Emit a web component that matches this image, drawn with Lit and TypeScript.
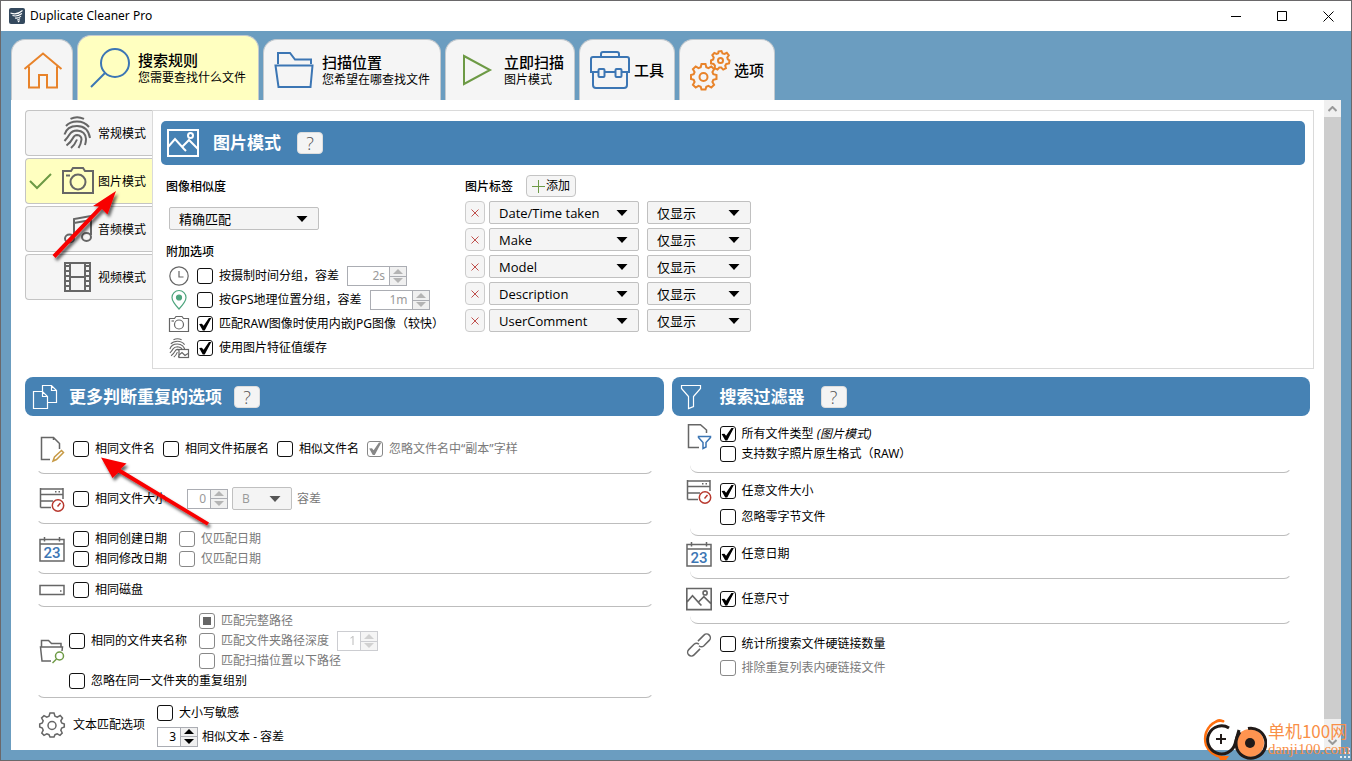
import { LitElement, html, svg, css, nothing } from "lit";
import { customElement, state } from "lit/decorators.js";
import { classMap } from "lit/directives/class-map.js";

const icon = (w: number, h: number, body: unknown, cls = "", box = `0 0 ${w} ${h}`) =>
  html`<svg class="ico ${cls}" width=${w} height=${h} viewBox=${box} aria-hidden="true">${body}</svg>`;

const print = svg`
  <path d="M7.500 2.800Q14 -.500 21 2.800"/>
  <path d="M3 10Q7 5.500 14 5.500Q21.500 5.500 26 11"/>
  <path d="M1.500 18.500Q4 10 14 10Q25 10 27 22"/>
  <path d="M1.500 25Q5 21 6.500 18.500Q9 14.500 14 14.500Q22.500 15 23 23Q23 26 22 29"/>
  <path d="M3.500 29.500Q8 26 10 22Q11.500 19 14 19Q18.500 19.500 18.500 23.500Q18 28 15.500 32"/>
  <path d="M8 32Q12 28.500 14 23.500"/>`;

const I = {
  home: () => icon(40, 40, svg`<path d="M2.500 19L21 3.500L39.500 19M7 16.500V37.500H17V25H25V37.500H35V16.500" />`, "orange s2"),
  search: () => icon(40, 40, svg`<circle cx="25" cy="15" r="14"/><path d="M15 25L1 39"/>`, "blue s2"),
  folder: () => icon(40, 40, svg`<path d="M4 14V3H16L21 9.500H37V14M1.500 15.500H38.500L36.500 37H4.500Z"/>`, "blue s2"),
  play: () => icon(40, 40, svg`<path d="M8 6L34 20L8 34Z"/>`, "green s2"),
  tools: () => icon(40, 40, svg`<path d="M11 7V4Q11 2 13 2H27Q29 2 29 4V7M3 7H37Q39 7 39 9V22H32M8 22H1V9Q1 7 3 7M15 22H25"/><rect x="8.500" y="19" width="6" height="8" rx="1"/><rect x="25.500" y="19" width="6" height="8" rx="1"/><path d="M3 23V35Q3 38 6 38H34Q37 38 37 35V23"/>`, "blue s2"),
  gears: () => icon(40, 40, svg`
    <path d="M11.500 14H15.500L16.300 17.200L18.500 18.100L21.300 16.400L24.100 19.200L22.400 22L23.300 24.200L26.500 25V29L23.300 29.800L22.400 32L24.100 34.800L21.300 37.600L18.500 35.900L16.300 36.800L15.500 39.500H11.500L10.700 36.800L8.500 35.900L5.700 37.600L2.900 34.800L4.600 32L3.700 29.800L1 29V25L3.700 24.200L4.600 22L2.900 19.200L5.700 16.400L8.500 18.100L10.700 17.200Z"/><circle cx="13.500" cy="27" r="4"/>
    <path d="M28.500 1.500L31.500 1L32.500 3.500L34.500 4L36.800 2.800L38.800 5.200L37.300 7.500L37.800 9.300L39.500 10.500L39 13.500L36.300 14L35.200 15.600L35.900 18.300L33.200 19.600L31.200 17.600L29.300 17.600L27.500 19.500L24.800 18.400L24.900 15.600L23.600 14L21 13.500V10.500L23.200 9.500L23.700 7.500L22.300 5.200L24.300 3L26.700 4L28.200 3.300Z"/><circle cx="30.500" cy="10.500" r="2.500"/>`, "orange s2"),
  print: () => icon(32, 34, svg`<g transform="translate(1 0)">${print}</g>`, "grey s2"),
  camera: () => icon(32, 28, svg`<path d="M1 4H9L11 1H21L23 4H31V26H1Z"/><circle cx="16" cy="15" r="7.500"/><path d="M4 8.500H8"/>`, "grey s2"),
  music: () => icon(32, 30, svg`<path d="M12 23V5L29 2V21M12 9L29 6"/><ellipse cx="7.500" cy="24.500" rx="4.500" ry="4"/><ellipse cx="24.500" cy="23" rx="4.500" ry="4"/>`, "grey s2"),
  film: () => icon(32, 32, svg`<path d="M3 2H28V30H3ZM8 2V30M23 2V30M8 16H23"/><path d="M5.500 4V29M25.500 4V29" stroke-dasharray="2 3" stroke-width="3"/>`, "grey s2"),
  tick: () => icon(24, 20, svg`<path d="M1 10L8 17L22 3"/>`, "green s2 tick"),
  picture: (w: number, h: number, cls: string) => icon(w, h, svg`<path d="M1 1H31V27H1ZM1 18L8 10L17 20L19 22M15 18L22 11L31 20"/><circle cx="23.500" cy="6.500" r="2.500"/>`, cls, "0 0 32 28"),
  clock: () => icon(20, 20, svg`<circle cx="10" cy="10" r="9.200"/><path d="M10 5V11H14.500"/>`, "grey s1"),
  pin: () => icon(20, 20, svg`<path d="M10 19Q3 11.500 3 7.500A7 7 0 0 1 17 7.500Q17 11.500 10 19Z"/><circle cx="10" cy="7.500" r="2.500" fill="#4ea57e"/>`, "teal s1"),
  cameraSmall: () => icon(20, 20, svg`<path d="M.500 4.500H5.500L7 2.500H13L14.500 4.500H19.500V17.500H.500Z"/><circle cx="10" cy="10.500" r="4.500"/><path d="M2.500 7H5"/>`, "grey s1"),
  printSmall: () => icon(20, 20, svg`<g transform="scale(.6)" stroke-width="1.800">${print}</g><rect x="10" y="11.500" width="9.500" height="8" fill="#fff"/><path d="M10 17L13 14.500L16 17.500L19 15.500"/>`, "grey s1"),
  copies: () => icon(26, 26, svg`<path d="M1.500 7.500H10.500L15.500 12.500V24.500H1.500ZM10.500 7.500V12.500H15.500M10.500 7V1.500H19.500L24.500 6.500V18.500H16M19.500 1.500V6.500H24.500"/>`, "white s1"),
  funnel: () => icon(26, 26, svg`<path d="M2.500 1.500H21.500V4.500L14.500 12.500V22.500L9.500 24.500V12.500L2.500 4.500Z"/>`, "white s1"),
  docPen: () => icon(26, 26, svg`<path d="M11 23.500H2.500V1.500H14.500L20.500 7.500V13M14.500 1.500V4"/><path class="gold" d="M14 25L15.500 21L22.500 14.500L24.500 16.500L17.500 23.500Z"/>`, "grey s15"),
  docFunnel: () => icon(26, 26, svg`<path d="M13 23.500H2.500V.700H14.500L20.500 6V9"/><path class="bluepart" d="M12.500 12.500H24.500V13.500L20 18.500V23L17 24.500V18.500L12.500 13.500Z"/>`, "grey s15"),
  disk: () => icon(26, 26, svg`<path d="M12 21.500H1.500M1 3H24M24 2V13M1.500 2V21.500M1.500 8.500H24M1.500 15H14M16 5.700H17.500M19.500 5.700H21"/><g class="red"><circle cx="19" cy="19.500" r="5.700" fill="#fff"/><path d="M18.500 20.500L21.500 17"/></g>`, "grey s15"),
  calendar: () => icon(26, 26, svg`<path d="M1 3.500H25V25H1ZM1 8H25M5.500 1V5.500M20.500 1V5.500"/><text x="13" y="22" text-anchor="middle" class="day">23</text>`, "grey s15"),
  drive: () => icon(26, 26, svg`<path d="M1 8.500H25V17.500H1Z"/><path d="M21 14H22.500"/>`, "grey s15"),
  folderFind: () => icon(26, 26, svg`<path d="M2.500 9V2.500H9.500L12.500 5.500H22V9M12 23H3L1.500 9H23.500L23 13"/><g class="greenpart"><circle cx="20.500" cy="18" r="4"/><path d="M17.500 21L13.500 25"/></g>`, "grey s15"),
  gear: () => icon(26, 26, svg`<path d="M11 1H15L16 4.300L18.200 5.200L21.200 3.500L23.500 6L21.800 8.800L22.700 11L25.300 12V15L22.700 16L21.800 18.200L23.200 21L21 23.300L18.200 21.800L16 22.700L15 25H11L10 22.700L7.800 21.800L5 23.300L2.800 21L4.200 18.200L3.300 16L.700 15V12L3.300 11L4.200 8.800L2.600 6L5 3.600L7.800 5.200L10 4.300Z"/><circle cx="13" cy="13.500" r="4"/>`, "grey s15"),
  link: () => icon(26, 26, svg`<g transform="rotate(-45 13 13)"><path d="M11 16.500H2.500A3.700 3.700 0 0 1 2.500 9H10A3.700 3.700 0 0 1 13.500 12.500M15 9.500H23.500A3.700 3.700 0 0 1 23.500 17H16A3.700 3.700 0 0 1 12.500 13.500"/></g>`, "grey s15"),
};

interface CheckOpts { on?: boolean; off?: boolean; mixed?: boolean }

const check = (text: unknown, o: CheckOpts = {}) => html`
  <label class="check"><input type="checkbox" .checked=${!!o.on} .indeterminate=${!!o.mixed} ?disabled=${!!o.off} /><span>${text}</span></label>`;

const pick = (label: string, options: string[], size: string, disabled = false) => html`
  <span class="pick ${size}">
    <select aria-label=${label} ?disabled=${disabled}>${options.map((t) => html`<option>${t}</option>`)}</select>
    <svg width="12" height="6" viewBox="0 0 12 6" aria-hidden="true"><path d="M.500 0H11.500L6 6Z"/></svg>
  </span>`;

const spin = (label: string, value: string, cls = "", disabled = true) => html`
  <span class="spin ${cls}">
    <input type="text" aria-label=${label} .value=${value} ?disabled=${disabled} />
    <span class="steps">
      <button aria-label="${label} +" ?disabled=${disabled}><svg width="10" height="5" viewBox="0 0 10 5"><path d="M0 5L5 0L10 5Z"/></svg></button>
      <button aria-label="${label} −" ?disabled=${disabled}><svg width="10" height="5" viewBox="0 0 10 5"><path d="M0 0L5 5L10 0Z"/></svg></button>
    </span>
  </span>`;

const help = () => html`<button class="help" aria-label="帮助">?</button>`;

@customElement("app-root")
export class AppRoot extends LitElement {
  static styles = css`
    :host { display: flex; flex-direction: column; height: 100vh; box-sizing: border-box; position: relative;
      border: 1px solid #6a686a; background: #6b9dc0; color: #000; overflow: hidden;
      font: 12px/20px "Noto Sans", "Noto Sans CJK SC", sans-serif; }
    * { box-sizing: border-box; }
    button, input, select { font: inherit; color: inherit; margin: 0; padding: 0; }
    h2, h3 { margin: 0; }
    .ico { fill: none; flex: none; stroke: #666; display: block; overflow: visible; }
    .s1 { stroke-width: 1.2; } .s15 { stroke-width: 1.5; } .s2 { stroke-width: 2; }
    .blue { stroke: #3c76b4; } .orange { stroke: #e8832a; } .green { stroke: #6d9a45; }
    .teal { stroke: #4ea57e; } .white { stroke: #fff; }
    .gold { stroke: #c79a45; } .bluepart { stroke: #3c76b4; } .red { stroke: #b8392f; } .greenpart { stroke: #6d9a45; }
    .day { font: 500 15px Roboto, sans-serif; fill: #3c76b4; stroke: none; }

    .titlebar { flex: none; height: 30px; display: flex; align-items: center; background: #fff; padding-left: 8px; }
    .titlebar .name { margin-left: 5px; flex: 1; }
    .winbtn { width: 46px; height: 30px; border: 0; background: none; display: grid; place-items: center; }
    .winbtn svg { fill: none; stroke: #000; }

    .tabs { flex: none; height: 69px; display: flex; align-items: flex-end; gap: 4px; padding: 0 10px; }
    .tab { height: 61px; display: flex; align-items: center; gap: 4px; padding: 0 10px; text-align: left;
      border: 1px solid #c3c9ce; border-bottom: 0; border-radius: 14px 14px 0 0; background: #f5f5f5; white-space: nowrap; }
    .tab.sub { gap: 8px; }
    .tab.sub span { padding-top: 2px; }
    .tab.active { height: 65px; background: #ffffc0; padding: 0 12px; }
    .tab b { display: block; font-size: 15px; line-height: 18px; font-weight: 500; }
    .tab small { display: block; font-size: 12px; line-height: 18px; }

    .body { flex: 1; min-height: 0; margin: 0 10px 10px; display: flex; background: #fff; }
    .page { flex: 1; min-width: 0; overflow-y: auto; scrollbar-width: none; padding: 10px 10px 0 14px; }
    .bar { flex: none; width: 17px; display: flex; flex-direction: column; background: #f0f0f0; }
    .bar button { border: 0; height: 17px; background: #f0f0f0; display: grid; place-items: center; }
    .bar svg { fill: none; stroke: #999; stroke-width: 2; }
    .thumb { flex: 1; background: #cdcdcd; margin-bottom: 14px; }

    .top { display: flex; }
    .modes { display: flex; flex-direction: column; gap: 2px; width: 127px; flex: none; }
    .mode { height: 46px; display: grid; grid-template-columns: 29px 32px 48px; column-gap: 4px; align-items: center;
      padding: 0 0 0 3px; border: 1px solid #c4c4c4; border-right: 0; border-radius: 4px 0 0 4px; background: #f5f5f5; text-align: left; white-space: nowrap; }
    .mode span { padding-top: 2px; }
    .mode .ico { justify-self: center; }
    .mode .tick { justify-self: start; }
    .mode.active { background: #ffffc0; }
    .panel { flex: 1; min-width: 0; border: 1px solid #dadada; padding: 10px 8px 8px; }

    .head { display: flex; align-items: center; background: #4682b4; color: #fff; }
    .head h2 { font-size: 17px; line-height: 24px; font-weight: 700; }
    .panel .head { height: 44px; border-radius: 5px; padding-left: 6px; }
    .panel .head h2 { margin: 0 16px 0 14px; }
    .card .head { height: 39px; border-radius: 8px; padding-left: 7px; }
    .card .head h2 { margin: 0 12px 0 11px; }
    .card.filters .head h2 { margin: 0 16px 0 15px; }
    .help { width: 26px; height: 22px; border: 1px solid #ddd; border-radius: 4px; background: #f4f4f4; color: #555; font: 300 18px/20px "Open Sans", sans-serif; }

    .cols { display: flex; padding-top: 10px; }
    .left { width: 304px; padding-left: 8px; flex: none; }
    h3 { font-size: 12px; height: 22px; line-height: 24px; font-weight: 500; }
    .left h3 { margin-left: -3px; }
    .left .pick { margin: 10px 0; }
    .opt { height: 24px; display: flex; align-items: center; gap: 8px; white-space: nowrap; }
    .opts { padding-top: 2px; }
    .tagsHead { display: flex; gap: 13px; margin-bottom: 4px; }
    .add { height: 22px; width: 50px; border: 1px solid #c4c4c4; border-radius: 4px; background: #f5f5f5; display: flex; align-items: center; justify-content: center; gap: 1px; }
    .tag { display: flex; margin-bottom: 4px; }
    .del { width: 20px; height: 23px; border: 1px solid #ccc; border-radius: 4px; background: #f5f5f5; display: grid; place-items: center; margin-right: 4px; }
    .del svg { stroke: #c0504d; fill: none; }
    .tag .wide { margin-right: 8px; }

    .pick { display: grid; height: 23px; align-items: center; }
    .pick select, .pick svg { grid-area: 1 / 1; }
    .pick select { appearance: none; width: 100%; height: 23px; border: 1px solid #c0c0c0; border-radius: 2px; background: #f4f4f4; padding: 1px 24px 0 9px; font: 13px/20px "Open Sans", "Noto Sans CJK SC", sans-serif; }
    .pick svg { justify-self: end; margin-right: 11px; pointer-events: none; }
    .pick select:disabled { color: #999; opacity: 1; font-size: 12px; }
    .pick select:disabled + svg { fill: #555; }
    .wide { width: 150px; } .mid { width: 104px; } .slim { width: 60px; }

    .check { display: inline-flex; align-items: center; gap: 6px; white-space: nowrap; }
    .check input { appearance: none; flex: none; width: 16px; height: 16px; border: 1px solid #111; border-radius: 3px; background: #fff; display: grid; }
    .check input::before { content: ""; }
    .check input:checked::before { background: #000; clip-path: polygon(8% 50%, 28% 48%, 40% 62%, 78% 8%, 95% 8%, 48% 96%, 34% 96%); }
    .check input:indeterminate::before { background: #666; margin: 3px; }
    .check input:disabled { border-color: #888; }
    .check input:disabled:checked::before { background: #888; }
    .check input:disabled + span { color: #7a7a7a; }

    .spin { display: inline-flex; width: 41px; height: 20px; border: 1px solid #abadb3; background: #fff; }
    .spin.long { width: 60px; }
    .spin > input { flex: 1; min-width: 0; width: 0; border: 0; background: none; text-align: right; padding-right: 4px; line-height: 18px; }
    .spin > input:disabled { color: #9a9a9a; }
    .steps { width: 17px; display: flex; flex-direction: column; border-left: 1px solid #abadb3; background: #f0f0f0; }
    .steps button { flex: 1; border: 0; background: none; display: grid; place-items: center; }
    .steps button + button { border-top: 1px solid #abadb3; }
    .steps svg { fill: #000; display: block; }
    .steps button:disabled svg { fill: #b4b4b4; }
    .spin.faint { opacity: 0.6; }

    .bottom { display: grid; grid-template-columns: 1fr 1fr; gap: 8px; margin: 8px 4px 0 0; }
    .criteria .list { margin: 8px 10px 0 11px; }
    .filters .list { margin: 1px 18px 0 18px; }
    .sec { display: flex; gap: 8px; align-items: center; border: 1px solid transparent; border-bottom-color: #bdbdbd; border-width: 0 1px 1px; border-radius: 8px; white-space: nowrap; padding-left: 2px; }
    .sec:last-child { border-bottom-color: transparent; }
    .line { display: flex; align-items: center; gap: 8px; height: 20px; }
    .line.far { gap: 12px; }
    .mute { color: #777; }
    .h50 { height: 50px; } .h33 { height: 33px; }
    .folders { height: 91px; gap: 4px; padding-bottom: 2px; }
    .pathRow { display: flex; align-items: center; gap: 12px; }
    .texts { height: 54px; }
    .texts .line { height: 24px; gap: 4px; }
    .texts .rows { margin-left: 4px; }
    .size .spin { margin-left: 12px; }
    .size .pick { margin-left: -4px; margin-right: -3px; }
    .filters .sec { align-items: flex-start; border-left-width: 0; padding-left: 0; }
    .filters .sec > .ico { margin-left: -4px; }
    .types { height: 56px; padding-top: 7px; }
    .sizes { height: 63px; padding-top: 5px; } .sizes .line { height: 26px; }
    .dates { height: 43px; padding-top: 5px; } .dates .line { height: 26px; }
    .dims { height: 45px; padding-top: 7px; } .dims .line { height: 26px; }
    .links { padding-top: 8px; } .links .line { height: 24px; }

    .marks { position: absolute; left: -1px; top: -1px; pointer-events: none; }
    .brand { position: absolute; right: 1px; bottom: 0; display: flex; gap: 1px; align-items: flex-start; color: #f98f47; pointer-events: none; }
    .brand div { padding-top: 4px; height: 42px; }
    .brand p { margin: 0; font: 17px/18px "Noto Sans CJK SC", sans-serif; }
    .brand p + p { font: 15px/18px "Liberation Serif", serif; }
    .grip { position: absolute; right: 1px; bottom: 1px; fill: #e8eef2; }
  `;

  static modes = [
    { name: "常规模式", draw: I.print },
    { name: "图片模式", draw: I.camera },
    { name: "音频模式", draw: I.music },
    { name: "视频模式", draw: I.film },
  ];
  static tags = ["Date/Time taken", "Make", "Model", "Description", "UserComment"];

  @state() mode = 1;

  private tab(draw: () => unknown, title: string, sub = "", active = false) {
    return html`<button class=${classMap({ tab: true, sub: !!sub, active })} aria-label=${title || "主页"}>
      ${draw()}${title ? html`<span><b>${title}</b>${sub ? html`<small>${sub}</small>` : nothing}</span>` : nothing}
    </button>`;
  }

  render() {
    return html`
      <header class="titlebar">
        <svg width="16" height="16" viewBox="0 0 16 16" aria-hidden="true"><rect width="16" height="16" rx="2" fill="#34495e"/><path d="M1.500 5Q8 7.500 13.500 2.500M3.500 7.500Q8 9 13 5.500M6 10Q10 10.500 12 8M8 12Q10 12 11 10.500M9 14L10.500 12.500" fill="none" stroke="#fff" stroke-width="1.100"/></svg>
        <span class="name">Duplicate Cleaner Pro</span>
        <button class="winbtn" aria-label="最小化"><svg width="10" height="11"><path d="M0 5.500H10"/></svg></button>
        <button class="winbtn" aria-label="最大化"><svg width="11" height="11"><path d="M.500 .500H9.500V9.500H.500Z"/></svg></button>
        <button class="winbtn" aria-label="关闭"><svg width="11" height="11"><path d="M.500 .500L10.500 10.500M10.500 .500L.500 10.500"/></svg></button>
      </header>
      <nav class="tabs">
        ${this.tab(I.home, "")}
        ${this.tab(I.search, "搜索规则", "您需要查找什么文件", true)}
        ${this.tab(I.folder, "扫描位置", "您希望在哪查找文件")}
        ${this.tab(I.play, "立即扫描", "图片模式")}
        ${this.tab(I.tools, "工具")}
        ${this.tab(I.gears, "选项")}
      </nav>
      <main class="body">
        <div class="page">
          <div class="top">
            <div class="modes">
              ${AppRoot.modes.map((m, i) => html`<button class=${classMap({ mode: true, active: i === this.mode })} @click=${() => (this.mode = i)}>
                ${i === this.mode ? I.tick() : html`<span></span>`}${m.draw()}<span>${m.name}</span></button>`)}
            </div>
            <section class="panel">
              <div class="head">${I.picture(32, 28, "white s2")}<h2>图片模式</h2>${help()}</div>
              <div class="cols">
                <div class="left">
                  <h3>图像相似度</h3>
                  ${pick("图像相似度", ["精确匹配"], "wide")}
                  <h3>附加选项</h3>
                  <div class="opts">
                    <div class="opt">${I.clock()}${check("按摄制时间分组，容差")}${spin("时间容差", "2s", "long")}</div>
                    <div class="opt">${I.pin()}${check("按GPS地理位置分组，容差")}${spin("位置容差", "1m", "long")}</div>
                    <div class="opt">${I.cameraSmall()}${check("匹配RAW图像时使用内嵌JPG图像（较快）", { on: true })}</div>
                    <div class="opt">${I.printSmall()}${check("使用图片特征值缓存", { on: true })}</div>
                  </div>
                </div>
                <div>
                  <div class="tagsHead"><h3>图片标签</h3><button class="add"><svg width="13" height="13" stroke="#6d9a45" aria-hidden="true"><path d="M6.500 0V13M0 6.500H13"/></svg>添加</button></div>
                  ${AppRoot.tags.map((t) => html`<div class="tag">
                    <button class="del" aria-label="删除 ${t}"><svg width="8" height="8"><path d="M.500 .500L7.500 7.500M7.500 .500L.500 7.500"/></svg></button>
                    ${pick("标签", [t], "wide")}${pick("方式", ["仅显示"], "mid")}</div>`)}
                </div>
              </div>
            </section>
          </div>
          <div class="bottom">
            <section class="card criteria">
              <div class="head">${I.copies()}<h2>更多判断重复的选项</h2>${help()}</div>
              <div class="list">
                <div class="sec h50">${I.docPen()}${check("相同文件名")}${check("相同文件拓展名")}${check("相似文件名")}${check("忽略文件名中“副本”字样", { on: true, off: true })}</div>
                <div class="sec h50 size">${I.disk()}${check("相同文件大小")}${spin("大小容差", "0")}${pick("单位", ["B"], "slim", true)}<span class="mute">容差</span></div>
                <div class="sec h50">${I.calendar()}<div>
                  <div class="line far">${check("相同创建日期")}${check("仅匹配日期", { off: true })}</div>
                  <div class="line far">${check("相同修改日期")}${check("仅匹配日期", { off: true })}</div></div></div>
                <div class="sec h33">${I.drive()}${check("相同磁盘")}</div>
                <div class="sec folders">${I.folderFind()}<div>
                  <div class="pathRow">${check("相同的文件夹名称")}<div>
                    <div class="line">${check("匹配完整路径", { mixed: true, off: true })}</div>
                    <div class="line">${check("匹配文件夹路径深度", { off: true })}${spin("路径深度", "1", "faint")}</div>
                    <div class="line">${check("匹配扫描位置以下路径", { off: true })}</div></div></div>
                  <div class="line">${check("忽略在同一文件夹的重复组别")}</div></div></div>
                <div class="sec texts">${I.gear()}<span>文本匹配选项</span><div class="rows">
                  <div class="line">${check("大小写敏感")}</div>
                  <div class="line">${spin("相似文本容差", "3", "", false)}<span>相似文本 - 容差</span></div></div></div>
              </div>
            </section>
            <section class="card filters">
              <div class="head">${I.funnel()}<h2>搜索过滤器</h2>${help()}</div>
              <div class="list">
                <div class="sec types">${I.docFunnel()}<div><div class="line">${check(html`所有文件类型 <i>(图片模式)</i>`, { on: true })}</div><div class="line">${check("支持数字照片原生格式（RAW）")}</div></div></div>
                <div class="sec sizes">${I.disk()}<div><div class="line">${check("任意文件大小", { on: true })}</div><div class="line">${check("忽略零字节文件")}</div></div></div>
                <div class="sec dates">${I.calendar()}<div class="line">${check("任意日期", { on: true })}</div></div>
                <div class="sec dims">${I.picture(26, 26, "grey s2")}<div class="line">${check("任意尺寸", { on: true })}</div></div>
                <div class="sec links">${I.link()}<div><div class="line">${check("统计所搜索文件硬链接数量")}</div><div class="line">${check("排除重复列表内硬链接文件", { off: true })}</div></div></div>
              </div>
            </section>
          </div>
        </div>
        <div class="bar">
          <button aria-label="向上滚动"><svg width="9" height="6"><path d="M.500 5L4.500 1L8.500 5"/></svg></button>
          <div class="thumb"></div>
          <button aria-label="向下滚动"><svg width="9" height="6"><path d="M.500 1L4.500 5L8.500 1"/></svg></button>
        </div>
      </main>
      <svg class="marks" width="230" height="540" aria-hidden="true">
        <defs><filter id="sh" x="-20%" y="-20%" width="150%" height="150%"><feDropShadow dx="2" dy="3" stdDeviation="1.500" flood-color="#000" flood-opacity=".6"/></filter></defs>
        <g filter="url(#sh)" fill="#f80000">
          <path d="M116 191L107.500 214.500L102 209L55.500 258L52.500 255L99 206.500L93 206Z"/>
          <path d="M101 457.500L126.500 463.500L120.500 469L209 522.500L207 525.500L118.500 472.500L112.500 478Z"/>
        </g>
      </svg>
      <svg class="grip" width="11" height="11" aria-hidden="true"><path d="M9 0h2v2H9zM9 4h2v2H9zM9 8h2v2H9zM5 4h2v2H5zM5 8h2v2H5zM1 8h2v2H1z"/></svg>
      <div class="brand">
        <svg width="66" height="42" viewBox="0 0 66 42" fill="none" aria-hidden="true">
          <path d="M23 3.500Q16 1 9 8Q2 16 5 27Q9 37 22 39.500" stroke="#ff6f0f" stroke-width="2.500"/>
          <path d="M13 4Q18-2 24 4ZM17 38H28L25 42H19Z" fill="#ff6f0f"/>
          <path d="M28 10A14 14 0 1 0 34 26L38 12" stroke="#211a18" stroke-width="3" fill="none"/>
          <path d="M20 16V26M15 21H25" stroke="#211a18" stroke-width="2"/>
          <circle cx="49" cy="25" r="14" fill="#ff9450"/><path d="M39 14Q33 22 36 31A15 15 0 1 0 47 10.500" stroke="#211a18" stroke-width="3"/>
          <circle cx="49" cy="25" r="5" fill="#211a18"/>
        </svg>
        <div><p>单机100网</p><p>danji100.com</p></div>
      </div>`;
  }
}
